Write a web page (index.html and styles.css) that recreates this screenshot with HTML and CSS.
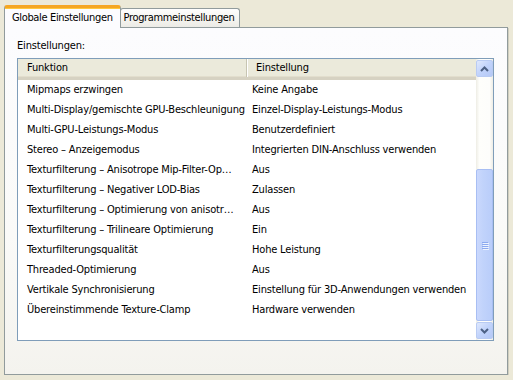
FILE: index.html
```html
<!DOCTYPE html>
<html lang="de">
<head>
  <meta charset="UTF-8" />
  <title>Globale Einstellungen</title>
  <link rel="stylesheet" href="styles.css">
</head>
<body>
  <div class="dialog">
    <div class="tabs">
      <div class="tab active">Globale Einstellungen</div>
      <div class="tab">Programmeinstellungen</div>
    </div>

    <div class="panel">
      <div class="caption">Einstellungen:</div>

      <div class="listbox">
        <div class="list">
          <div class="header">
            <div class="col first">Funktion</div>
            <div class="col second">Einstellung</div>
          </div>
          <div class="row"><div class="col first">Mipmaps erzwingen</div><div class="col second">Keine Angabe</div></div>
          <div class="row"><div class="col first">Multi-Display/gemischte GPU-Beschleunigung</div><div class="col second">Einzel-Display-Leistungs-Modus</div></div>
          <div class="row"><div class="col first">Multi-GPU-Leistungs-Modus</div><div class="col second">Benutzerdefiniert</div></div>
          <div class="row"><div class="col first">Stereo – Anzeigemodus</div><div class="col second">Integrierten DIN-Anschluss verwenden</div></div>
          <div class="row"><div class="col first">Texturfilterung – Anisotrope Mip-Filter-Op…</div><div class="col second">Aus</div></div>
          <div class="row"><div class="col first">Texturfilterung – Negativer LOD-Bias</div><div class="col second">Zulassen</div></div>
          <div class="row"><div class="col first">Texturfilterung – Optimierung von anisotr…</div><div class="col second">Aus</div></div>
          <div class="row"><div class="col first">Texturfilterung – Trilineare Optimierung</div><div class="col second">Ein</div></div>
          <div class="row"><div class="col first">Texturfilterungsqualität</div><div class="col second">Hohe Leistung</div></div>
          <div class="row"><div class="col first">Threaded-Optimierung</div><div class="col second">Aus</div></div>
          <div class="row"><div class="col first">Vertikale Synchronisierung</div><div class="col second">Einstellung für 3D-Anwendungen verwenden</div></div>
          <div class="row"><div class="col first">Übereinstimmende Texture-Clamp</div><div class="col second">Hardware verwenden</div></div>
        </div>

        <div class="scrollbar">
          <div class="sb-btn">
            <svg width="9" height="6" viewBox="0 0 9 6"><path d="M1 5 L4.5 1.5 L8 5" fill="none" stroke="#4d6185" stroke-width="2"/></svg>
          </div>
          <div class="sb-track">
            <div class="sb-thumb">
              <div class="grip"><span></span><span></span><span></span><span></span></div>
            </div>
          </div>
          <div class="sb-btn">
            <svg width="9" height="6" viewBox="0 0 9 6"><path d="M1 1 L4.5 4.5 L8 1" fill="none" stroke="#4d6185" stroke-width="2"/></svg>
          </div>
        </div>
      </div>
    </div>
  </div>
</body>
</html>
```

FILE: styles.css
```css
body {
  margin: 0;
  background-color: #ece9d8;
  font-family: "DejaVu Sans Condensed", "DejaVu Sans", sans-serif;
  font-stretch: condensed;
  font-size: 11px;
  letter-spacing: -0.18px;
  color: #000;
}

.dialog {
  padding: 5px 0 0 4px;
}

.tabs {
  display: flex;
  align-items: flex-end;
  height: 22px;
  letter-spacing: -0.35px;
}

.tab {
  height: 18px;
  padding: 0 4px 0 3px;
  line-height: 18px;
  border: 1px solid #919b9c;
  border-bottom: none;
  border-radius: 3px 3px 0 0;
  background: linear-gradient(#fefefe, #f4f3ee 60%, #ecebe6);
}

.tab.active {
  position: relative;
  z-index: 1;
  height: 20px;
  margin-bottom: -1px;
  padding: 0 7px 0 7px;
  line-height: 20px;
  border-top: 3px solid #f5a623;
  background: #fcfcfe;
  box-shadow: inset 0 1px 0 #ffc83c;
}

.tab + .tab {
  margin-left: -1px;
}

.panel {
  width: 490px;
  height: 346px;
  border: 1px solid #919b9c;
  box-shadow: 1px 1px 0 #d0cebf;
  background: linear-gradient(#fcfcfe, #fafaf8 60%, #f4f3ee);
  padding: 0 0 0 12px;
}

.caption {
  padding-top: 11px;
  height: 19px;
  line-height: 13px;
}

.listbox {
  display: flex;
  width: 475px;
  height: 281px;
  border: 1px solid #7f9db9;
  background: #fff;
}

.list {
  flex: 1;
  overflow: hidden;
}

.header {
  display: flex;
  height: 18px;
  line-height: 18px;
  background: #ebeadb;
  border-bottom: 3px solid #d6d2c2;
  box-shadow: inset 0 -1px 0 #e2decd;
}

.header .first {
  border-right: 1px solid #c7c5b2;
  box-shadow: 1px 0 0 #fff;
}

.row {
  display: flex;
  height: 20px;
  line-height: 20px;
}

.col {
  white-space: nowrap;
  overflow: hidden;
}

.col.first {
  width: 219px;
  padding-left: 9px;
}

.col.second {
  flex: 1;
  padding-left: 6px;
}

.header .col.second {
  padding-left: 9px;
}

.scrollbar {
  width: 17px;
  display: flex;
  flex-direction: column;
  background: linear-gradient(to right, #eeede5, #fefefb 20%, #fdfdfb 80%, #eeede5);
}

.sb-btn {
  width: 15px;
  height: 15px;
  margin: 1px 0;
  display: flex;
  align-items: center;
  justify-content: center;
  border: 1px solid #b9cbf3;
  border-radius: 2px;
  background: linear-gradient(135deg, #dfe8fd, #c1d3fb 50%, #b5c8f6);
}

.sb-track {
  flex: 1;
}

.sb-thumb {
  margin-top: 91px;
  height: 150px;
  border: 1px solid #a8bef3;
  border-radius: 2px;
  background: linear-gradient(to right, #cad8fd, #c1d3fb 40%, #b9cdfa);
  display: flex;
  align-items: center;
  justify-content: center;
}

.grip {
  display: flex;
  flex-direction: column;
  gap: 1px;
}

.grip span {
  display: block;
  width: 6px;
  height: 1px;
  background: #8caaf0;
  box-shadow: 1px 1px 0 #eef4fe;
}
```
